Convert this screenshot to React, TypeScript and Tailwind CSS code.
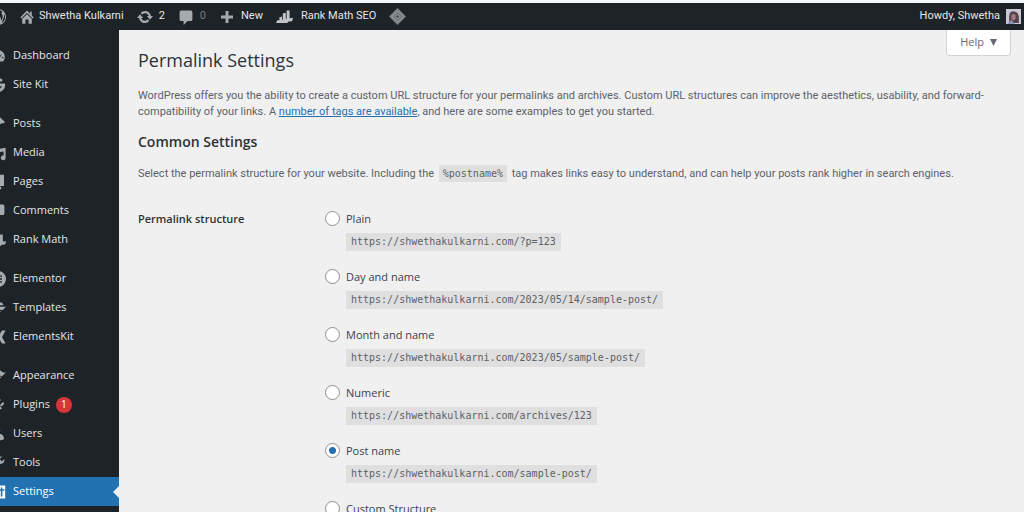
import React from 'react';

type IconProps = { className?: string };

interface MenuItem {
  label: string;
  icon: React.ReactNode;
  badge?: number;
  active?: boolean;
}

const Svg: React.FC<{ children: React.ReactNode; className?: string }> = ({ children, className }) => (
  <svg viewBox="0 0 20 20" fill="currentColor" aria-hidden="true" className={className}>
    {children}
  </svg>
);

const WordPressIcon = ({ className }: IconProps) => (
  <Svg className={className}>
    <path d="M20 10c0-5.51-4.49-10-10-10C4.48 0 0 4.49 0 10c0 5.52 4.48 10 10 10 5.51 0 10-4.48 10-10zM7.78 15.37L4.37 6.22c.55-.02 1.17-.08 1.17-.08.5-.06.44-1.13-.06-1.11 0 0-1.45.11-2.37.11-.18 0-.37 0-.58-.01C4.12 2.69 6.87 1.11 10 1.11c2.33 0 4.45.87 6.05 2.34-.68-.11-1.65.39-1.65 1.58 0 .74.45 1.36.9 2.1.35.61.55 1.36.55 2.46 0 1.49-1.4 5-1.4 5l-3.03-8.37c.54-.02.82-.17.82-.17.5-.05.44-1.25-.06-1.22 0 0-1.44.12-2.38.12-.87 0-2.33-.12-2.33-.12-.5-.03-.56 1.2-.06 1.22l.92.08 1.26 3.41zM17.41 10c.24-.64.74-1.87.43-4.25.7 1.29 1.05 2.71 1.05 4.25 0 3.29-1.73 6.24-4.4 7.78.97-2.59 1.94-5.2 2.92-7.78zM6.1 18.09C3.12 16.65 1.11 13.53 1.11 10c0-1.3.23-2.48.72-3.59C3.25 10.3 4.67 14.2 6.1 18.09zm4.03-6.63l2.58 6.98c-.86.29-1.76.45-2.71.45-.79 0-1.57-.11-2.29-.33.81-2.38 1.62-4.74 2.42-7.1z" />
  </Svg>
);

const HomeIcon = ({ className }: IconProps) => (
  <Svg className={className}>
    <path d="M16 8l2.500 2.500-1.400 1.400L10 4.900l-7.100 7L1.500 10.500 10 2l4 4V3h2zM10 6.500l6 5.800V18.500h-4V13H8v5.500H4v-6.200z" />
  </Svg>
);

const UpdateIcon = ({ className }: IconProps) => (
  <Svg className={className}>
    <path d="M10.200 2.500c3.700 0 6.700 2.800 7.200 6.300H20L16.200 13.500l-3.900-4.700h2.300c-.5-2-2.200-3.500-4.400-3.500-1.500 0-2.800.7-3.600 1.800L4.700 4.900c1.300-1.500 3.300-2.400 5.500-2.400zM9.800 17.500c-3.700 0-6.700-2.800-7.200-6.300H0L3.800 6.500l3.900 4.700H5.400c.5 2 2.200 3.500 4.400 3.500 1.500 0 2.800-.7 3.600-1.800l1.900 2.200c-1.300 1.500-3.300 2.400-5.500 2.400z" />
  </Svg>
);

const CommentIcon = ({ className }: IconProps) => (
  <Svg className={className}>
    <path d="M4 2h12a2 2 0 0 1 2 2v9a2 2 0 0 1-2 2h-4l-5 5v-5H4a2 2 0 0 1-2-2V4a2 2 0 0 1 2-2z" />
  </Svg>
);

const PlusIcon = ({ className }: IconProps) => (
  <Svg className={className}>
    <path d="M17.500 8.200v3.600h-5.700v5.700H8.200v-5.700H2.500V8.200h5.700V2.500h3.600v5.700z" />
  </Svg>
);

const RankMathIcon = ({ className }: IconProps) => (
  <Svg className={className}>
    <path d="M0 17.500l1.500-3H4V11l3-1v4l1-.5V6.500l3.500-1V13l1-1V3H16v9l4-.5-1 4-4 .5-2 1.500z" />
  </Svg>
);

const DiamondIcon = ({ className }: IconProps) => (
  <Svg className={className}>
    <path d="M10 0l10 10-10 10L0 10z" fill="#7d8185" />
    <path d="M10 3.500l6.500 6.500-6.500 6.500L3.500 10z" fill="#6a6e73" stroke="#a9acaf" strokeWidth="1" />
    <path d="M10 7l3 3-3 3-3-3z" fill="#50555a" stroke="#b9bbbe" strokeWidth="1" />
  </Svg>
);

const DashboardIcon = ({ className }: IconProps) => (
  <Svg className={className}>
    <path
      fillRule="evenodd"
      d="M3.760 17h12.480A8.500 8.500 0 1 0 1.500 11.500c0 2.100.8 4 2.260 5.500zM10 4.500a1 1 0 1 1 0 2 1 1 0 0 1 0-2zM5 7a1 1 0 1 1 0 2 1 1 0 0 1 0-2zm10 0l-3 6a2.200 2.200 0 1 1-1.500-1zm1 4a1 1 0 1 1 0 2 1 1 0 0 1 0-2z"
    />
  </Svg>
);

const SiteKitIcon = ({ className }: IconProps) => (
  <Svg className={className}>
    <path d="M10 8h8.800c.8 5.500-2.600 10.800-8.800 10.800A8.800 8.800 0 1 1 16 3.700l-2.400 2.400A5.200 5.200 0 1 0 14.800 11.600H10z" />
  </Svg>
);

const PinIcon = ({ className }: IconProps) => (
  <Svg className={className}>
    <path d="M10.440 3.020l1.820-1.820 6.360 6.350-1.830 1.820c-1.050-.68-2.480-.57-3.410.36l-.75.75c-.92.93-1.040 2.350-.35 3.410l-1.830 1.820-2.410-2.410-2.800 2.790c-.42.42-3.380 2.710-3.800 2.290s1.860-3.390 2.280-3.810l2.790-2.790L4.100 9.360l1.830-1.820c1.050.69 2.480.57 3.400-.36l.75-.75c.93-.92 1.050-2.350.36-3.410z" />
  </Svg>
);

const MediaIcon = ({ className }: IconProps) => (
  <Svg className={className}>
    <path d="M1 3h10v3H9v6H1zM9.500 5l10-1.500v12.500a3 3 0 1 1-2.500-2.900V8l-5 .8v8.700a3 3 0 1 1-2.500-2.900z" />
  </Svg>
);

const PagesIcon = ({ className }: IconProps) => (
  <Svg className={className}>
    <path d="M6 1h11.500v14H6zM3 5h2v11h9v3H3z" />
  </Svg>
);

const ElementorIcon = ({ className }: IconProps) => (
  <Svg className={className}>
    <path
      fillRule="evenodd"
      d="M10 0a10 10 0 1 0 0 20 10 10 0 0 0 0-20zM6.500 6h1.800v8H6.500zM10 5.500h5v1.800h-5zm0 3.600h5v1.800h-5zm0 3.600h5v1.800h-5z"
    />
  </Svg>
);

const TemplatesIcon = ({ className }: IconProps) => (
  <Svg className={className}>
    <path d="M2 3h13l2 3.500H2zM2 8.500h18l-4 4H2zM4 14h10l-3 3H5z" />
  </Svg>
);

const ElementsKitIcon = ({ className }: IconProps) => (
  <Svg className={className}>
    <path d="M1 3h7v3H1zM1 8.500h6v3H1zM1 14h7v3H1zM15 2h4.500l-4.500 8 4.500 8H15l-5-8z" />
  </Svg>
);

const AppearanceIcon = ({ className }: IconProps) => (
  <Svg className={className}>
    <path d="M14.480 11.060L7.410 3.990l1.500-1.500c.5-.56 2.300-.47 3.510.32 1.210.8 1.430 1.280 2.910 2.100 1.180.64 2.450 1.260 4.450.85zm-.71.710L6.700 4.700 4.930 6.470c-.39.39-.39 1.020 0 1.410l1.060 1.060c.39.39.39 1.030 0 1.420-.6.600-1.430 1.110-2.210 1.690-.35.260-.7.530-1.010.84C1.430 14.230.400 16.080 1.400 17.070c.99 1 2.840-.03 4.180-1.360.31-.31.58-.66.850-1.020.57-.78 1.080-1.610 1.690-2.210.39-.39 1.020-.39 1.410 0l1.060 1.060c.39.39 1.020.39 1.410 0z" />
  </Svg>
);

const PluginsIcon = ({ className }: IconProps) => (
  <Svg className={className}>
    <path d="M13.110 4.360L9.870 7.600 8 5.730l3.240-3.240c.35-.34 1.050-.2 1.560.32.52.51.660 1.210.31 1.550zm-8 1.770l.91-1.120 9.010 9.010-1.190.84c-.71.710-2.630 1.160-3.820 1.160H6.140L4.900 17.260c-.59.59-1.540.59-2.120 0-.59-.58-.59-1.530 0-2.120l1.240-1.240v-3.880c0-1.130.4-3.190 1.090-3.890zm7.260 3.970l3.240-3.240c.34-.35 1.040-.21 1.550.31.520.510.660 1.210.310 1.550l-3.240 3.250z" />
  </Svg>
);

const UsersIcon = ({ className }: IconProps) => (
  <Svg className={className}>
    <path d="M10 9.250c-2.270 0-2.730-3.440-2.730-3.440C7 4.020 7.820 2 9.970 2c2.160 0 2.980 2.020 2.710 3.810 0 0-.41 3.440-2.680 3.440zm0 2.570L12.720 10c2.390 0 4.520 2.330 4.520 4.530v2.490s-3.650 1.130-7.240 1.130c-3.650 0-7.240-1.130-7.240-1.130v-2.490c0-2.250 1.940-4.480 4.470-4.480z" />
  </Svg>
);

const ToolsIcon = ({ className }: IconProps) => (
  <Svg className={className}>
    <path d="M16.680 9.770c-1.340 1.340-3.300 1.670-4.950.99l-5.410 6.520c-.99.990-2.590.990-3.580 0s-.99-2.590 0-3.570l6.520-5.420c-.68-1.650-.35-3.610.990-4.950 1.280-1.280 3.120-1.620 4.720-1.060l-2.890 2.890 2.820 2.820 2.860-2.870c.53 1.580.180 3.390-1.080 4.650z" />
  </Svg>
);

const SettingsIcon = ({ className }: IconProps) => (
  <Svg className={className}>
    <path
      fillRule="evenodd"
      d="M1 2h18v16H1zM6 4.500v6H4.500v2H6v3h1.500v-3H9v-2H7.500v-6zM13.500 4.500v2H11v2h2.500v7h2v-7H18v-2h-2.500v-2z"
    />
  </Svg>
);

const menuGroups: MenuItem[][] = [
  [
    { label: 'Dashboard', icon: <DashboardIcon className="size-4" /> },
    { label: 'Site Kit', icon: <SiteKitIcon className="size-4" /> },
  ],
  [
    { label: 'Posts', icon: <PinIcon className="size-4" /> },
    { label: 'Media', icon: <MediaIcon className="size-4" /> },
    { label: 'Pages', icon: <PagesIcon className="size-4" /> },
    { label: 'Comments', icon: <CommentIcon className="size-4" /> },
    { label: 'Rank Math', icon: <RankMathIcon className="size-4" /> },
  ],
  [
    { label: 'Elementor', icon: <ElementorIcon className="size-4" /> },
    { label: 'Templates', icon: <TemplatesIcon className="size-4" /> },
    { label: 'ElementsKit', icon: <ElementsKitIcon className="size-4" /> },
  ],
  [
    { label: 'Appearance', icon: <AppearanceIcon className="size-4" /> },
    { label: 'Plugins', icon: <PluginsIcon className="size-4" />, badge: 1 },
    { label: 'Users', icon: <UsersIcon className="size-4" /> },
    { label: 'Tools', icon: <ToolsIcon className="size-4" /> },
    { label: 'Settings', icon: <SettingsIcon className="size-4" />, active: true },
  ],
];

const structures = [
  { id: 'plain', label: 'Plain', example: 'https://shwethakulkarni.com/?p=123' },
  { id: 'day-name', label: 'Day and name', example: 'https://shwethakulkarni.com/2023/05/14/sample-post/' },
  { id: 'month-name', label: 'Month and name', example: 'https://shwethakulkarni.com/2023/05/sample-post/' },
  { id: 'numeric', label: 'Numeric', example: 'https://shwethakulkarni.com/archives/123' },
  { id: 'post-name', label: 'Post name', example: 'https://shwethakulkarni.com/sample-post/' },
  { id: 'custom', label: 'Custom Structure' },
];

const AdminBar = () => (
  <header className="flex h-[27px] shrink-0 items-center justify-between bg-[#1d2327] pr-[3px] font-['Roboto',sans-serif] text-[11px] text-[#e4e5e7]">
    <nav aria-label="Toolbar" className="flex items-center gap-[13px]">
      <a href="#about" aria-label="About WordPress" className="-ml-[10px] text-[#a7aaad]">
        <WordPressIcon className="size-4" />
      </a>
      <a href="#site" className="flex items-center gap-1">
        <HomeIcon className="size-4 text-[#a7aaad]" />
        Shwetha Kulkarni
      </a>
      <a href="#updates" className="flex items-center gap-[6px]">
        <UpdateIcon className="size-4 text-[#a7aaad]" />2
      </a>
      <a href="#comments" className="flex items-center gap-[6px] text-[#787c82]">
        <CommentIcon className="size-4 text-[#a7aaad]" />0
      </a>
      <a href="#new" className="flex items-center gap-[6px]">
        <PlusIcon className="size-4 text-[#a7aaad]" />
        New
      </a>
      <a href="#rank-math" className="flex items-center gap-2">
        <RankMathIcon className="size-[17px] text-[#c3c4c7]" />
        Rank Math SEO
      </a>
      <a href="#cache" aria-label="Cache">
        <DiamondIcon className="size-[17px]" />
      </a>
    </nav>
    <a href="#profile" className="flex items-center gap-[6px]">
      Howdy, Shwetha
      <svg viewBox="0 0 14 14" aria-hidden="true" className="size-[15px]">
        <rect width="14" height="14" fill="#c9c8d2" />
        <path d="M3 13V7q0-5 4-5t5 5v6z" fill="#54404f" />
        <path d="M5 6q2-3 4 0v3L7 11 5 9z" fill="#a3797a" />
        <path d="M1 14l4-4 3 4z" fill="#8d94b4" />
      </svg>
    </a>
  </header>
);

const Sidebar = () => (
  <nav
    aria-label="Main menu"
    className="flex w-[119px] shrink-0 flex-col gap-[10px] overflow-hidden bg-[#1d2327] pt-[11px] text-[11px] font-medium text-[#e4e5e7]"
  >
    {menuGroups.map((group, index) => (
      <ul key={index}>
        {group.map(item => (
          <li key={item.label}>
            <a
              href="#menu"
              aria-current={item.active ? 'page' : undefined}
              className={
                item.active
                  ? 'flex h-[29px] items-center bg-[#2271b1] text-white'
                  : 'flex h-[29px] items-center'
              }
            >
              <span className={item.active ? '-ml-[10px] mr-[7px]' : '-ml-[10px] mr-[7px] text-[#a7aaad]'}>
                {item.icon}
              </span>
              {item.label}
              {item.badge && (
                <span className="ml-[6px] flex size-4 items-center justify-center rounded-full bg-[#d63638] text-[10px] text-white">
                  {item.badge}
                </span>
              )}
              {item.active && (
                <svg viewBox="0 0 6 12" aria-hidden="true" className="ml-auto h-3 w-[6px] text-[#f0f0f1]">
                  <path d="M6 0v12L0 6z" fill="currentColor" />
                </svg>
              )}
            </a>
          </li>
        ))}
      </ul>
    ))}
  </nav>
);

export default function App() {
  return (
    <div className="flex h-screen flex-col overflow-hidden bg-[#f0f0f1] font-['Open_Sans',sans-serif] text-[11px] text-[#5d6268]">
      <div className="h-[3px] shrink-0 bg-[#f3f7fa]" />
      <AdminBar />
      <div className="flex min-h-0 flex-1">
        <Sidebar />
        <main className="min-w-0 flex-1 pl-[19px] pr-[13px]">
          <div className="flex items-start justify-between">
            <h1 className="pt-[16px] text-[18px] leading-7 text-[#2c3338]">Permalink Settings</h1>
            <button
              type="button"
              className="flex h-[26px] items-center gap-[6px] rounded-b border border-t-0 border-[#d2d3d6] bg-white px-[13px] text-[11px] text-[#646970]"
            >
              Help
              <svg viewBox="0 0 7 7" aria-hidden="true" className="size-[7px]">
                <path d="M0 0h7L3.500 7z" fill="currentColor" />
              </svg>
            </button>
          </div>
          <p className="mt-[14px] font-['Roboto',sans-serif] leading-4">
            WordPress offers you the ability to create a custom URL structure for your permalinks and archives. Custom
            URL structures can improve the aesthetics, usability, and forward-compatibility of your links. A{' '}
            <a href="#tags" className="text-[#2271b1] underline">number of tags are available</a>, and here are some
            examples to get you started.
          </p>
          <h2 className="mt-3 text-[14px] font-semibold leading-5 text-[#2c3338]">Common Settings</h2>
          <p className="mt-[13px] font-['Roboto',sans-serif] leading-[18px]">
            Select the permalink structure for your website. Including the{' '}
            <code className="mx-[2px] bg-[#dfdfe0] px-1 py-[3px] font-['DejaVu_Sans_Mono',monospace] text-[10px]">%postname%</code>{' '}
            tag makes links easy to understand, and can help your posts rank higher in search engines.
          </p>
          <fieldset className="mt-[27px] flex">
            <legend className="float-left w-[187px] text-[11px] font-semibold leading-[18px] text-[#2c3338]">
              Permalink structure
            </legend>
            <div className="flex flex-col gap-[17px]">
              {structures.map(item => (
                <div key={item.id} className="flex h-[41px] items-start gap-[6px]">
                  <input
                    type="radio"
                    id={item.id}
                    name="structure"
                    defaultChecked={item.id === 'post-name'}
                    className="mt-px size-[15px] appearance-none rounded-full border border-[#8c8f94] bg-white checked:bg-[radial-gradient(circle,#2271b1_3px,#fff_4px)]"
                  />
                  <div>
                    <label htmlFor={item.id} className="block text-[11px] font-medium leading-[18px] text-[#3c434a]">
                      {item.label}
                    </label>
                    {item.example && (
                      <code className="mt-[5px] block w-fit bg-[#dfdfe0] px-[5px] font-['DejaVu_Sans_Mono',monospace] text-[10px] leading-[18px]">
                        {item.example}
                      </code>
                    )}
                  </div>
                </div>
              ))}
            </div>
          </fieldset>
        </main>
      </div>
    </div>
  );
}
